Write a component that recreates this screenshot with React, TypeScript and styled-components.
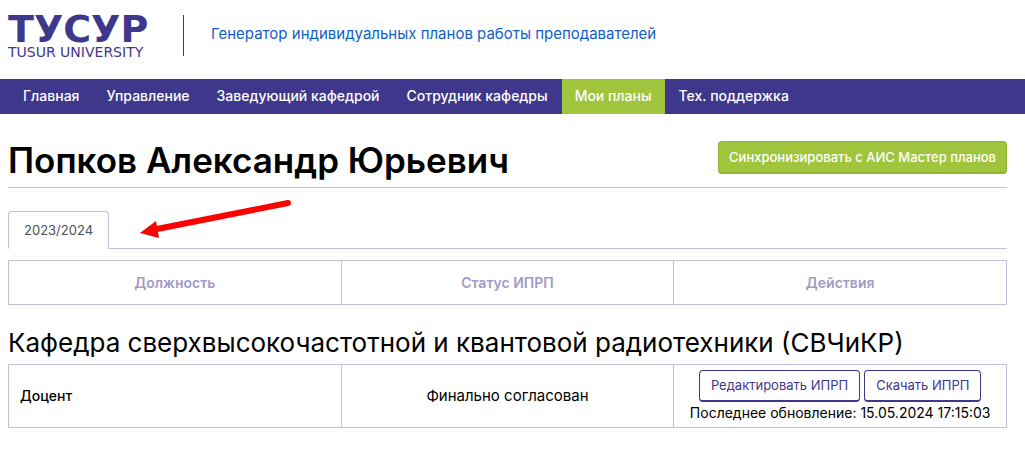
import React from 'react';
import styled, { createGlobalStyle } from 'styled-components';

const indigo = '#3e378b';
const green = '#a0c43c';
const line = '#c3bedd';

const GlobalStyle = createGlobalStyle`
  * { box-sizing: border-box; }
  body {
    margin: 0;
    background: #fff;
    color: #000;
    font-family: Inter, "Liberation Sans", sans-serif;
    font-size: 14px;
    line-height: 20px;
  }
`;

const Header = styled.header`
  display: flex;
  align-items: center;
  height: 79px;
  padding: 0 8px 8px;
`;

const Logo = styled.a`
  display: flex;
  flex-direction: column;
  justify-content: space-between;
  width: 148px;
  height: 46px;
  padding-top: 2px;
  color: ${indigo};
  text-decoration: none;
  white-space: nowrap;
`;

const LogoName = styled.span`
  display: block;
  font: bold 38px/28px "DejaVu Sans", sans-serif;
`;

const LogoCaption = styled.span`
  display: block;
  font: 14px/14px "DejaVu Sans", sans-serif;
`;

const Divider = styled.span`
  width: 1px;
  height: 41px;
  margin: 0 27px;
  background: ${indigo};
`;

const SiteTitle = styled.a`
  color: #0f5fc4;
  font-size: 15px;
  padding-bottom: 4px;
  text-decoration: none;
`;

const Nav = styled.nav`
  display: flex;
  gap: 1px;
  padding: 0 10px;
  background: ${indigo};
`;

const NavLink = styled.a<{ $active?: boolean }>`
  padding: 7px 13px 8px;
  background: ${p => (p.$active ? green : 'transparent')};
  color: #fff;
  font-size: 14px;
  font-weight: 500;
  text-decoration: none;
  white-space: nowrap;
`;

const Main = styled.main`
  padding: 27px 18px 30px 8px;
`;

const TitleRow = styled.div`
  display: flex;
  justify-content: space-between;
  align-items: flex-start;
  height: 47px;
  border-bottom: 1px solid ${line};
`;

const Title = styled.h1`
  margin: 0;
  font-size: 35px;
  line-height: 38px;
  font-weight: 600;
`;

const SyncButton = styled.button`
  height: 33px;
  padding: 0 10px;
  border: 1px solid #90b336;
  border-bottom-width: 2px;
  border-radius: 4px;
  background: ${green};
  color: #fff;
  font: 500 13px/20px Inter, sans-serif;
  white-space: nowrap;
`;

const Tabs = styled.div`
  position: relative;
  display: flex;
  height: 38px;
  margin: 23px 0 11px;
  border-bottom: 1px solid ${line};
`;

const Tab = styled.button`
  height: 38px;
  padding: 0 15px;
  border: 1px solid ${line};
  border-bottom-color: #fff;
  border-radius: 4px 4px 0 0;
  background: #fff;
  color: #495057;
  font: 13px/20px Inter, sans-serif;
`;

const Arrow = styled.svg`
  position: absolute;
  left: 130px;
  top: -14px;
  width: 160px;
  height: 44px;
`;

const Table = styled.table`
  width: 100%;
  table-layout: fixed;
  border-collapse: collapse;
`;

const HeadCell = styled.th`
  height: 44px;
  padding: 0 11px;
  border: 1px solid ${line};
  color: #a29ac8;
  font-weight: 600;
`;

const Department = styled.h2`
  margin: 22px 0 5px;
  font-size: 26px;
  line-height: 32px;
  font-weight: 400;
`;

const Cell = styled.td<{ $start?: boolean }>`
  height: 63px;
  padding: 4px 11px;
  border: 1px solid ${line};
  text-align: ${p => (p.$start ? 'left' : 'center')};
  font-size: ${p => (p.$start ? 14 : 15)}px;
  font-weight: ${p => (p.$start ? 500 : 400)};
`;

const Actions = styled.div`
  display: flex;
  justify-content: center;
  gap: 4px;
  margin-bottom: 1px;
`;

const ActionButton = styled.button`
  height: 32px;
  padding: 0 11px;
  border: 1px solid ${indigo};
  border-bottom-width: 2px;
  border-radius: 4px;
  background: #fff;
  color: ${indigo};
  font: 13px/20px Inter, sans-serif;
  white-space: nowrap;
`;

const Updated = styled.div`
  font-size: 14px;
  white-space: nowrap;
`;

const sections = [
  'Главная',
  'Управление',
  'Заведующий кафедрой',
  'Сотрудник кафедры',
  'Мои планы',
  'Тех. поддержка',
];

export default function App() {
  return (
    <>
      <GlobalStyle />
      <Header>
        <Logo href="#">
          <LogoName>ТУСУР</LogoName>
          <LogoCaption>TUSUR UNIVERSITY</LogoCaption>
        </Logo>
        <Divider />
        <SiteTitle href="#">Генератор индивидуальных планов работы преподавателей</SiteTitle>
      </Header>
      <Nav>
        {sections.map(name => (
          <NavLink key={name} href="#" $active={name === 'Мои планы'}>{name}</NavLink>
        ))}
      </Nav>
      <Main>
        <TitleRow>
          <Title>Попков Александр Юрьевич</Title>
          <SyncButton type="button">Синхронизировать с АИС Мастер планов</SyncButton>
        </TitleRow>
        <Tabs>
          <Tab type="button">2023/2024</Tab>
          <Arrow viewBox="0 0 160 44" aria-hidden="true">
            <path d="M150 6L19 32" stroke="#f00" strokeWidth="6" strokeLinecap="round" />
            <path d="M2 36L18 24L21 41Z" fill="#f00" />
          </Arrow>
        </Tabs>
        <Table>
          <thead>
            <tr>
              <HeadCell>Должность</HeadCell>
              <HeadCell>Статус ИПРП</HeadCell>
              <HeadCell>Действия</HeadCell>
            </tr>
          </thead>
        </Table>
        <Department>Кафедра сверхвысокочастотной и квантовой радиотехники (СВЧиКР)</Department>
        <Table>
          <tbody>
            <tr>
              <Cell $start>Доцент</Cell>
              <Cell>Финально согласован</Cell>
              <Cell>
                <Actions>
                  <ActionButton type="button">Редактировать ИПРП</ActionButton>
                  <ActionButton type="button">Скачать ИПРП</ActionButton>
                </Actions>
                <Updated>Последнее обновление: 15.05.2024 17:15:03</Updated>
              </Cell>
            </tr>
          </tbody>
        </Table>
      </Main>
    </>
  );
}
